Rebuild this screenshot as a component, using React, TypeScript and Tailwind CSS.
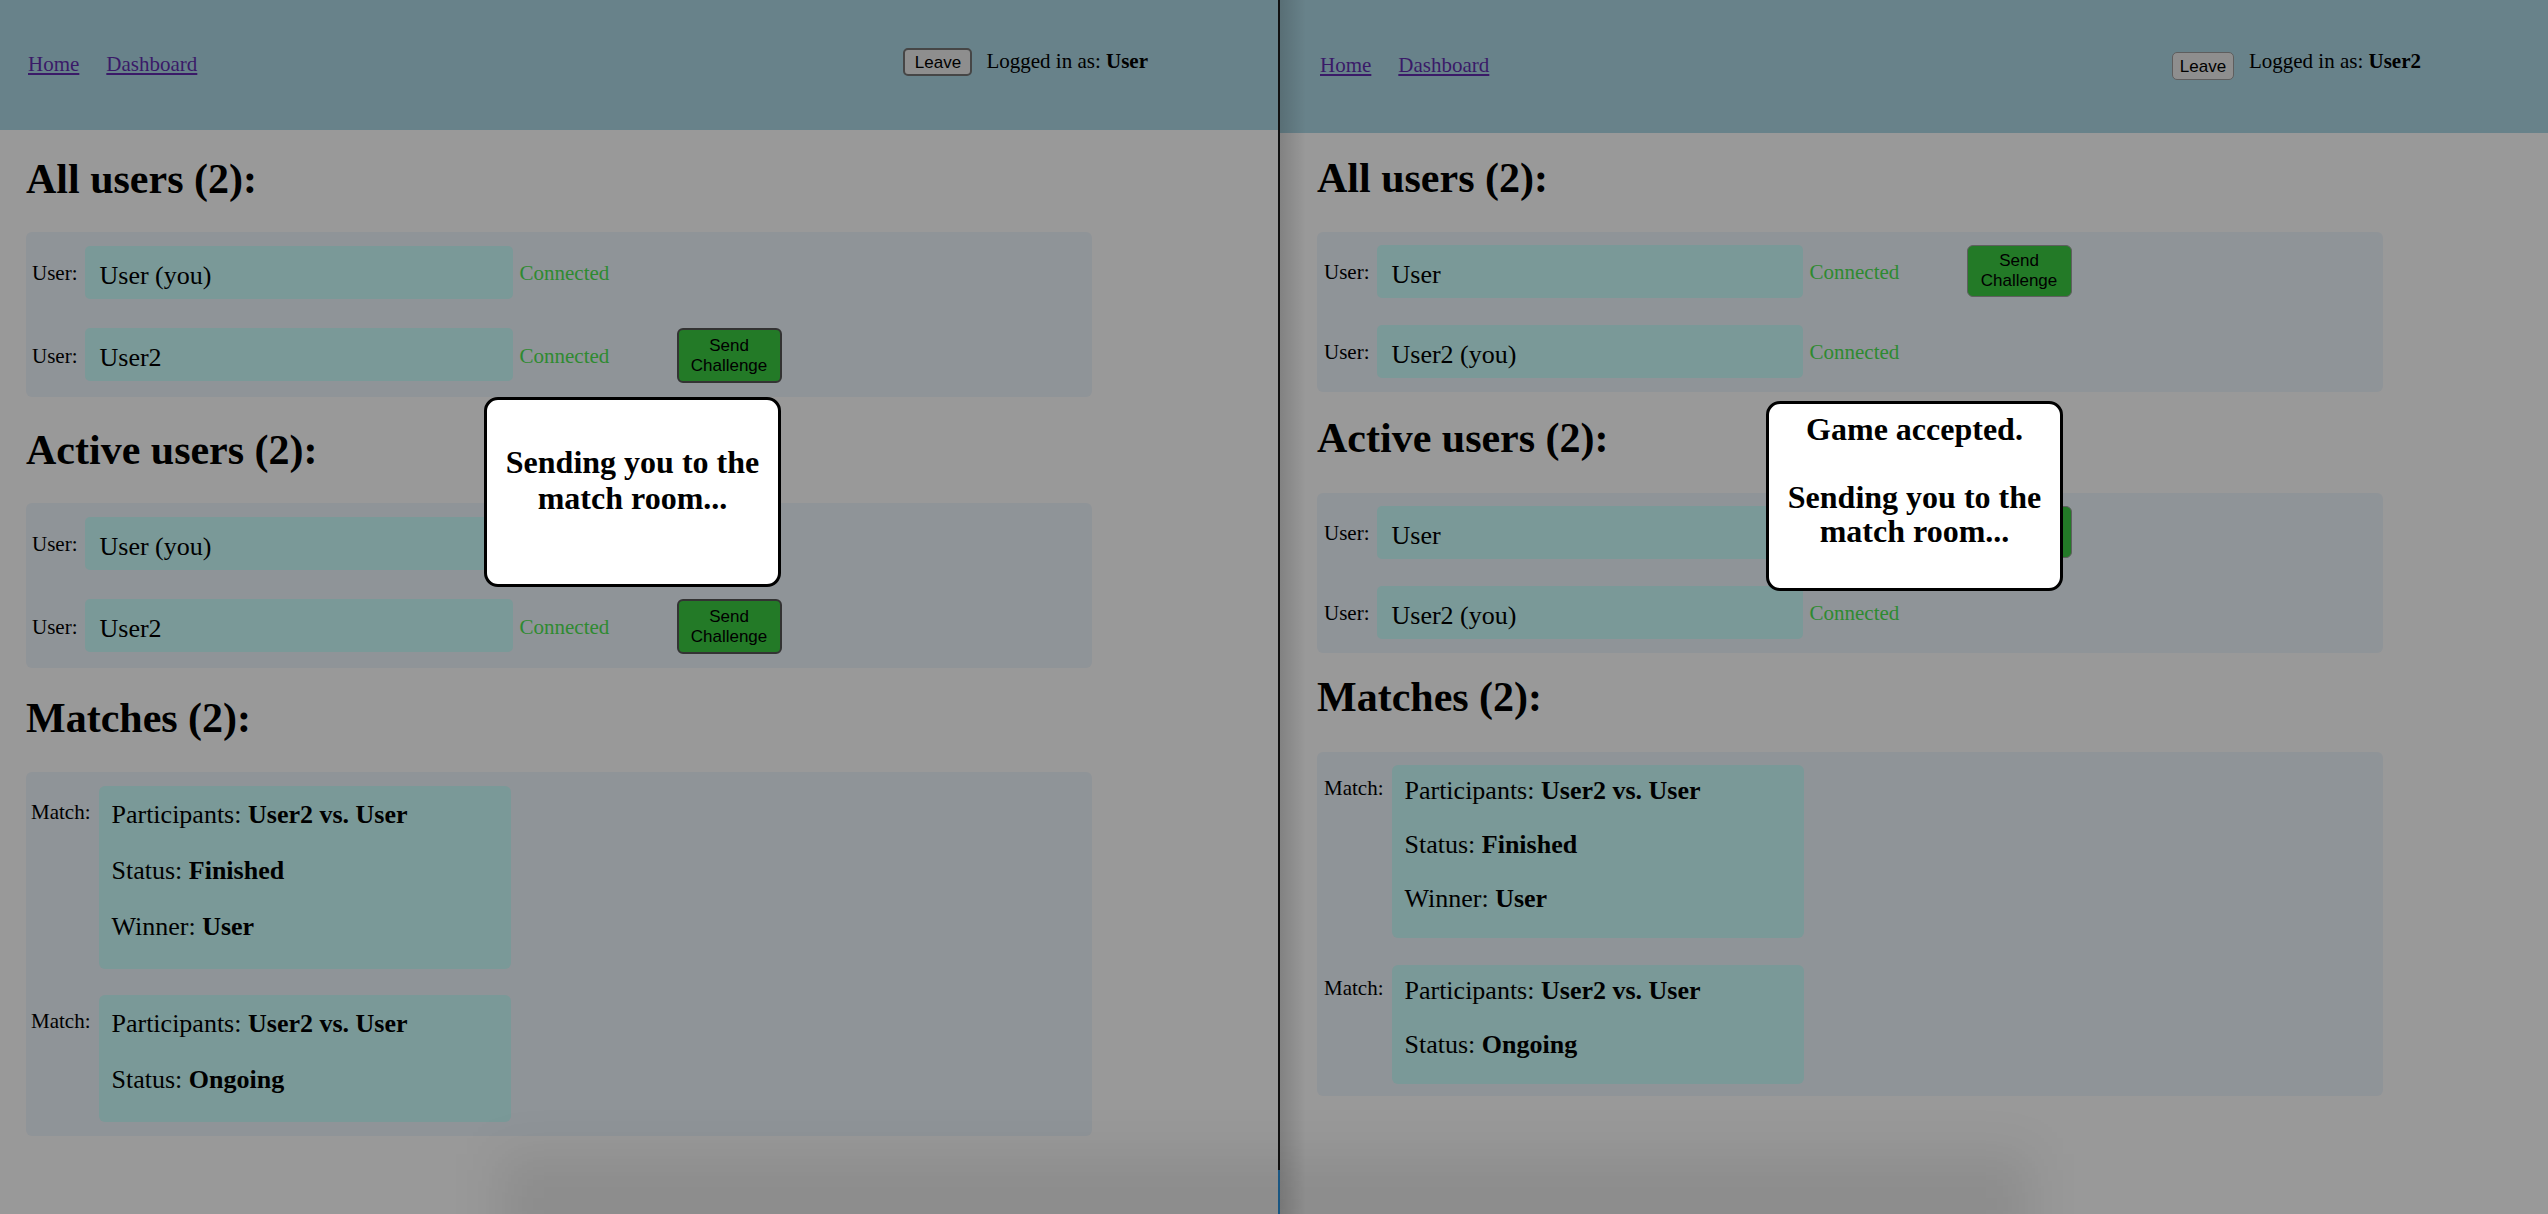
import React from 'react';

type UserEntry = { name: string; challenge: boolean };

type Side = {
  me: string;
  users: UserEntry[];
  width: string;
  header: string;
  nav: string;
  account: string;
  leave: string;
  content: string;
  h1: string;
  h2: string;
  h3: string;
  box: string;
  input: string;
  send: string;
  matchBox: string;
  matchLabel: string;
  card: string;
  modal: string;
  accepted: boolean;
};

const LEFT: Side = {
  me: 'User',
  users: [
    { name: 'User (you)', challenge: false },
    { name: 'User2', challenge: true },
  ],
  width: 'w-[1278px]',
  header: 'h-[130px]',
  nav: 'pt-[52px] pl-[28px]',
  account: 'pr-[130px] gap-[14px]',
  leave: 'w-[69px] h-[28px] border-2 border-[#464646] items-center',
  content: 'pl-[26px]',
  h1: 'mt-[25px] mb-[29px]',
  h2: 'mt-[29px] mb-[29px]',
  h3: 'mt-[26px] mb-[30px]',
  box: 'w-[1066px] pt-[14px] pb-[14px] pl-[6px] gap-[29px]',
  input: 'w-[428px]',
  send: 'h-[55px] border-2 border-[#333333]',
  matchBox: 'w-[1066px] pt-[14px] pb-[14px] pl-[5px] gap-[26px]',
  matchLabel: 'pt-[14px]',
  card: 'pt-[14px] pb-[27px] gap-[26px] leading-[30px]',
  modal: 'left-[484px] top-[397px] pt-[44px] leading-[36px]',
  accepted: false,
};

const RIGHT: Side = {
  me: 'User2',
  users: [
    { name: 'User', challenge: true },
    { name: 'User2 (you)', challenge: false },
  ],
  width: 'w-[1268px]',
  header: 'h-[133px]',
  nav: 'pt-[53px] pl-[40px]',
  account: 'pr-[127px] gap-[15px]',
  leave: 'w-[62px] h-[28px] mt-[4px] border border-[#5e5e5e] items-start pt-[4px]',
  content: 'pl-[37px]',
  h1: 'mt-[21px] mb-[30px]',
  h2: 'mt-[22px] mb-[31px]',
  h3: 'mt-[20px] mb-[31px]',
  box: 'w-[1066px] pt-[13px] pb-[14px] pl-[7px] gap-[27px]',
  input: 'w-[426px]',
  send: 'h-[52px] border border-[#5f5f5f]',
  matchBox: 'w-[1066px] pt-[13px] pb-[12px] pl-[7px] gap-[27px]',
  matchLabel: 'pt-[11px]',
  card: 'pt-[12px] pb-[25px] gap-[26px] leading-[28px]',
  modal: 'left-[486px] top-[401px] pt-[8px] leading-[34px]',
  accepted: true,
};

function UserList({ side }: { side: Side }) {
  return (
    <div className={`flex flex-col rounded-[6px] bg-[#8f9498] ${side.box}`}>
      {side.users.map((u) => (
        <div key={u.name} className="flex items-start gap-[7px]">
          <span className="self-center text-[21px] leading-[24px]">User:</span>
          <div className={`flex h-[53px] items-center rounded-[5px] bg-[#7a9998] pl-[15px] pt-[5px] text-[26px] ${side.input}`}>
            {u.name}
          </div>
          <span className="w-[150px] self-center text-[21px] leading-[24px] text-[#2e8a30]">Connected</span>
          {u.challenge && (
            <button
              className={`w-[105px] rounded-[6px] bg-[#237a27] font-['Liberation_Sans',Arial,sans-serif] text-[17px] leading-[20px] text-black ${side.send}`}
            >
              Send
              <br />
              Challenge
            </button>
          )}
        </div>
      ))}
    </div>
  );
}

function MatchCard({ side, rows }: { side: Side; rows: [string, string][] }) {
  return (
    <div className="flex items-start gap-[9px]">
      <span className={`text-[21px] leading-[24px] ${side.matchLabel}`}>Match:</span>
      <div className={`flex w-[412px] flex-col rounded-[6px] bg-[#7a9998] pl-[12px] text-[26px] ${side.card}`}>
        {rows.map(([k, v]) => (
          <div key={k}>
            {k}: <b>{v}</b>
          </div>
        ))}
      </div>
    </div>
  );
}

function Window({ side, shadow }: { side: Side; shadow?: boolean }) {
  return (
    <div className={`relative flex h-full shrink-0 flex-col overflow-hidden bg-[#999999] ${side.width}`}>
      {/* Header */}
      <div className={`flex shrink-0 justify-between bg-[#68828a] ${side.header}`}>
        <nav className={`flex gap-[27px] text-[21px] leading-[24px] ${side.nav}`}>
          <a href="#" className="text-[#3a1a68] underline">Home</a>
          <a href="#" className="text-[#3a1a68] underline">Dashboard</a>
        </nav>
        <div className={`flex items-start pt-[48px] ${side.account}`}>
          <button
            className={`flex justify-center rounded-[5px] bg-[#8e8e8e] font-['Liberation_Sans',Arial,sans-serif] text-[17px] leading-[19px] text-black ${side.leave}`}
          >
            Leave
          </button>
          <span className="mt-[1px] text-[21px] leading-[24px]">
            Logged in as: <b>{side.me}</b>
          </span>
        </div>
      </div>

      {/* Lists */}
      <div className={`flex flex-col ${side.content}`}>
        <h2 className={`text-[42px] font-bold leading-[48px] ${side.h1}`}>All users (2):</h2>
        <UserList side={side} />
        <h2 className={`text-[42px] font-bold leading-[48px] ${side.h2}`}>Active users (2):</h2>
        <UserList side={side} />
        <h2 className={`text-[42px] font-bold leading-[48px] ${side.h3}`}>Matches (2):</h2>
        <div className={`flex flex-col rounded-[6px] bg-[#8f9498] ${side.matchBox}`}>
          <MatchCard
            side={side}
            rows={[
              ['Participants', 'User2 vs. User'],
              ['Status', 'Finished'],
              ['Winner', 'User'],
            ]}
          />
          <MatchCard
            side={side}
            rows={[
              ['Participants', 'User2 vs. User'],
              ['Status', 'Ongoing'],
            ]}
          />
        </div>
      </div>

      {/* Modal */}
      <div
        className={`absolute h-[190px] w-[297px] rounded-[14px] border-[3px] border-black bg-white px-[8px] text-center text-[32px] font-bold ${side.modal}`}
      >
        {side.accepted && (
          <>
            Game accepted.
            <br />
            <br />
          </>
        )}
        Sending you to the match room...
      </div>

      {shadow && (
        <div className="pointer-events-none absolute inset-y-0 left-0 w-[26px] bg-linear-to-r from-black/15 to-transparent" />
      )}
    </div>
  );
}

export default function App() {
  return (
    <div className="relative flex h-[1214px] w-[2548px] overflow-hidden bg-[#999999] font-['Liberation_Serif','Times_New_Roman',serif] text-black">
      <Window side={LEFT} />
      <div className="flex w-[2px] shrink-0 flex-col">
        <div className="flex-1 bg-[#111111]" />
        <div className="h-[44px] bg-[#1c5d8c]" />
      </div>
      <Window side={RIGHT} shadow />
      {/* dock shadow */}
      <div className="pointer-events-none absolute bottom-[-40px] left-[500px] h-[100px] w-[1530px] bg-black/[0.08] blur-[24px]" />
    </div>
  );
}
